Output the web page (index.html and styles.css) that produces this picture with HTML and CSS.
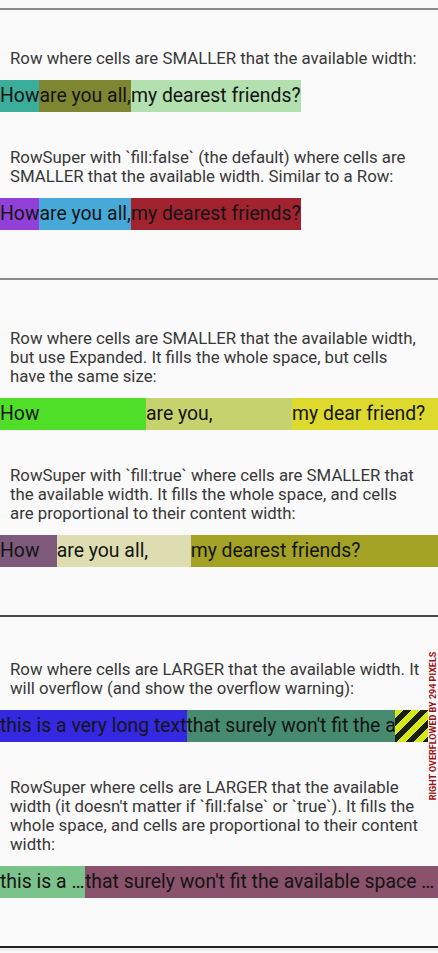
FILE: index.html
```html
<!DOCTYPE html>
<html lang="en">
<head>
<meta charset="utf-8">
<title>RowSuper demo</title>
<link rel="stylesheet" href="styles.css">
</head>
<body>
<div class="page">
  <div class="divider divider-a divider-top"></div>

  <section class="section section-1">
    <p class="desc">Row where cells are SMALLER that the available width:</p>
    <div class="row">
      <div class="cell c-teal">How</div>
      <div class="cell c-olive">are you all,</div>
      <div class="cell c-mint">my dearest friends?</div>
    </div>
    <p class="desc desc-next">RowSuper with `fill:false` (the default) where cells are SMALLER that the available width. Similar to a Row:</p>
    <div class="row">
      <div class="cell c-purple">How</div>
      <div class="cell c-sky">are you all,</div>
      <div class="cell c-wine">my dearest friends?</div>
    </div>
  </section>

  <div class="divider divider-a"></div>

  <section class="section section-2">
    <p class="desc">Row where cells are SMALLER that the available width, but use Expanded. It fills the whole space, but cells have the same size:</p>
    <div class="row">
      <div class="cell equal c-lime">How</div>
      <div class="cell equal c-pear">are you,</div>
      <div class="cell equal c-lemon">my dear friend?</div>
    </div>
    <p class="desc desc-next">RowSuper with `fill:true` where cells are SMALLER that the available width. It fills the whole space, and cells are proportional to their content width:</p>
    <div class="row">
      <div class="cell grow-1 c-mauve">How</div>
      <div class="cell grow-2 c-beige">are you all,</div>
      <div class="cell grow-3 c-moss">my dearest friends?</div>
    </div>
  </section>

  <div class="divider divider-b"></div>

  <section class="section section-3">
    <p class="desc">Row where cells are LARGER that the available width. It will overflow (and show the overflow warning):</p>
    <div class="overflow-wrap">
      <div class="row row-clip">
        <div class="cell c-blue">this is a very long text</div>
        <div class="cell c-sea">that surely won't fit the available space</div>
      </div>
      <div class="stripes"></div>
      <span class="overflow-label">RIGHT OVERFLOWED BY 294 PIXELS</span>
    </div>
    <p class="desc desc-next">RowSuper where cells are LARGER that the available width (it doesn't matter if `fill:false` or `true`). It fills the whole space, and cells are proportional to their content width:</p>
    <div class="row">
      <div class="cell w-short c-leaf">this is a …</div>
      <div class="cell w-long c-plum">that surely won't fit the available space …</div>
    </div>
  </section>

  <div class="divider divider-c"></div>
</div>
</body>
</html>
```

FILE: styles.css
```css
html, body {
  margin: 0;
  padding: 0;
  background: #fafafa;
}

body {
  font-family: Roboto, "Noto Sans", "Liberation Sans", sans-serif;
  width: 438px;
  height: 953px;
  overflow: hidden;
}

.page {
  display: flex;
  flex-direction: column;
}

.divider {
  height: 2px;
  flex: none;
}
.divider-top { margin-top: 8px; }
.divider-a { background: #8a8a8a; }
.divider-b { background: #4a4a4a; }
.divider-c { background: #222222; border-bottom: 3px solid #ececec; }

.section {
  display: flex;
  flex-direction: column;
  padding-bottom: 48px;
}
.section-1 { padding-top: 39px; }
.section-2 { padding-top: 49px; }
.section-3 { padding-top: 43px; }

.desc {
  margin: 0 0 12px 0;
  padding: 0 14px 0 10px;
  font-size: 16.8px;
  line-height: 19px;
  color: #383838;
}
.desc-next { margin-top: 36px; }

.row {
  display: flex;
  height: 32px;
  align-self: flex-start;
}
.section-2 .row, .section-3 .row { align-self: stretch; }

.cell {
  font-size: 19.4px;
  line-height: 32px;
  color: #141414;
  white-space: nowrap;
  flex: none;
}

.equal { flex: 1 1 0; overflow: hidden; }
.grow-1 { flex: 39 1 0; overflow: hidden; }
.grow-2 { flex: 92 1 0; overflow: hidden; }
.grow-3 { flex: 170 1 0; overflow: hidden; }
.w-short { width: 85px; overflow: hidden; }
.w-long { flex: 1 1 0; overflow: hidden; }

.c-teal { background: #3aae9a; }
.c-olive { background: #7e8632; }
.c-mint { background: #b3e0af; }
.c-purple { background: #9141d9; }
.c-sky { background: #47a9d8; }
.c-wine { background: #a1232f; }
.c-lime { background: #4fdf29; }
.c-pear { background: #c6d26e; }
.c-lemon { background: #ddd92d; }
.c-mauve { background: #7d597c; }
.c-beige { background: #deddb1; }
.c-moss { background: #a3a224; }
.c-blue { background: #3428e1; }
.c-sea { background: #468a6f; }
.c-leaf { background: #7cc28b; }
.c-plum { background: #8a526b; }

.overflow-wrap {
  position: relative;
  width: 428px;
  height: 32px;
}
.row-clip {
  width: 428px;
  overflow: hidden;
}
.c-sea { flex: 1 0 auto; }

.stripes {
  position: absolute;
  top: 0;
  right: 0;
  width: 33px;
  height: 32px;
  background: repeating-linear-gradient(135deg,
    #d4e81c 0px, #d4e81c 6px,
    #1a1f12 6px, #1a1f12 12px);
}

.overflow-label {
  position: absolute;
  left: 429px;
  top: 50%;
  transform: translateY(-50%) rotate(180deg);
  writing-mode: vertical-rl;
  font-family: Roboto, "Liberation Sans", sans-serif;
  font-weight: bold;
  font-size: 9px;
  line-height: 9px;
  color: #a01010;
  white-space: nowrap;
}
```
